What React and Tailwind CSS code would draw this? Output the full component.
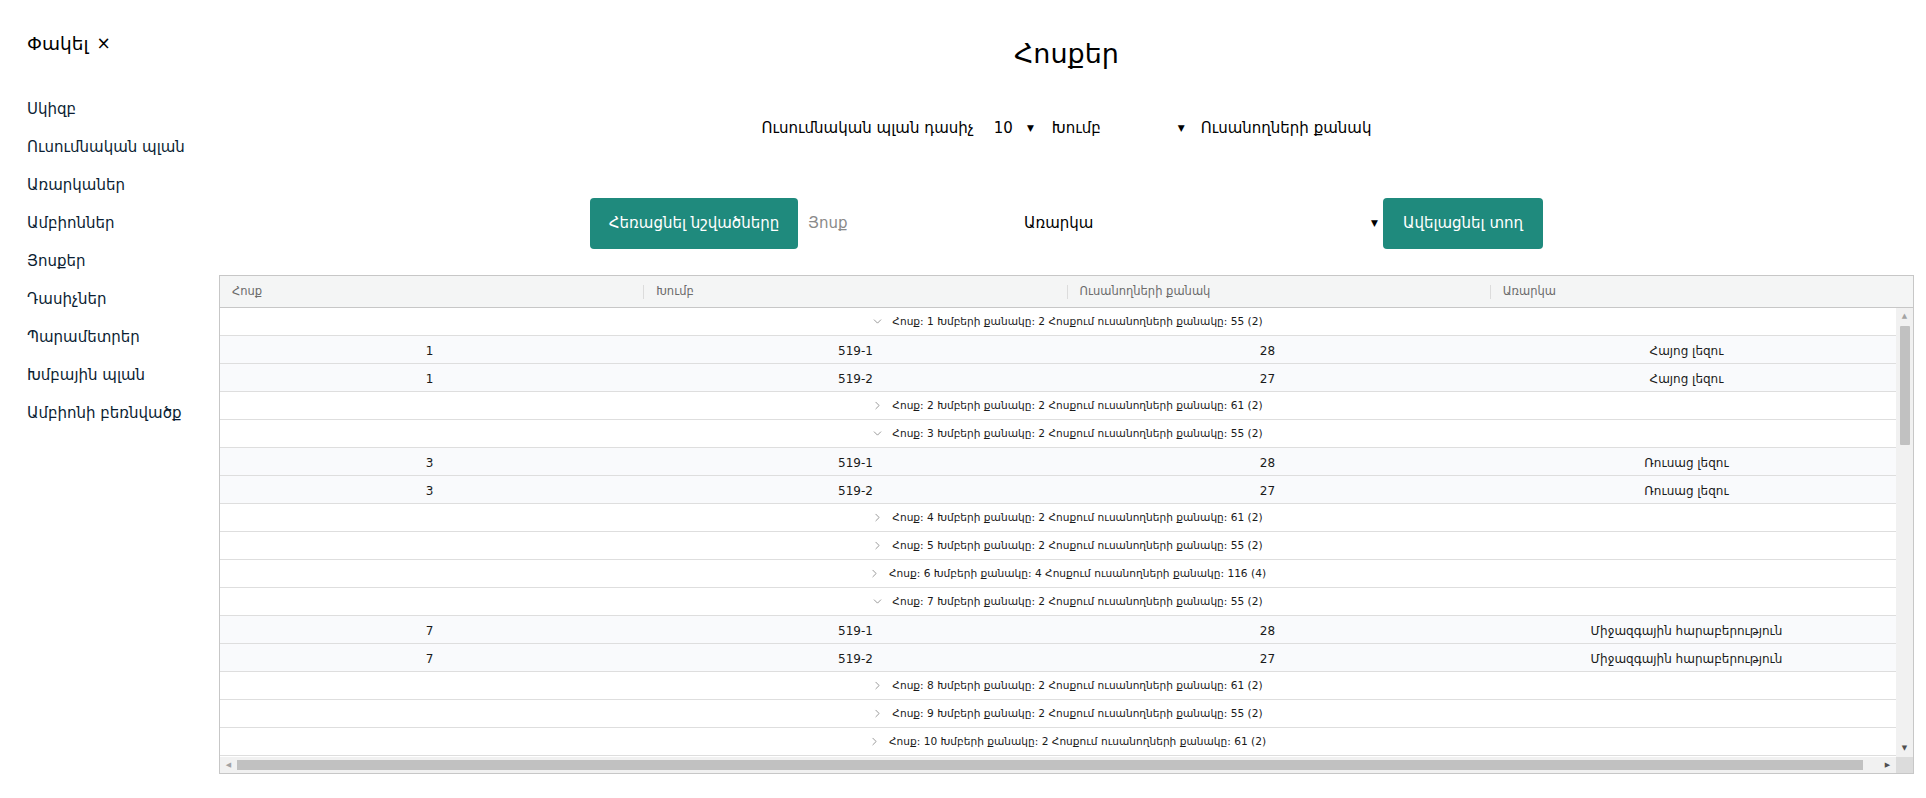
import { ChevronDown, ChevronRight } from "lucide-react";

const menu = [
  "Սկիզբ",
  "Ուսումնական պլան",
  "Առարկաներ",
  "Ամբիոններ",
  "Յոսքեր",
  "Դասիչներ",
  "Պարամետրեր",
  "Խմբային պլան",
  "Ամբիոնի բեռնվածք",
];

const rows = [
  { g: 1, n: 2, s: 55, c: 2, open: true },
  { d: ["1", "519-1", "28", "Հայոց լեզու"] },
  { d: ["1", "519-2", "27", "Հայոց լեզու"] },
  { g: 2, n: 2, s: 61, c: 2 },
  { g: 3, n: 2, s: 55, c: 2, open: true },
  { d: ["3", "519-1", "28", "Ռուսաց լեզու"] },
  { d: ["3", "519-2", "27", "Ռուսաց լեզու"] },
  { g: 4, n: 2, s: 61, c: 2 },
  { g: 5, n: 2, s: 55, c: 2 },
  { g: 6, n: 4, s: 116, c: 4 },
  { g: 7, n: 2, s: 55, c: 2, open: true },
  { d: ["7", "519-1", "28", "Միջազգային հարաբերություն"] },
  { d: ["7", "519-2", "27", "Միջազգային հարաբերություն"] },
  { g: 8, n: 2, s: 61, c: 2 },
  { g: 9, n: 2, s: 55, c: 2 },
  { g: 10, n: 2, s: 61, c: 2 },
];

const headers = ["Հոսք", "Խումբ", "Ուսանողների քանակ", "Առարկա"];

function Arrow() {
  return <span className="text-[9px] leading-none text-black">▼</span>;
}

export default function App() {
  return (
    <div className="flex h-[798px] w-[1926px] overflow-hidden bg-white font-['Segoe_UI','DejaVu_Sans',sans-serif] text-[#212529]">
      {/* sidebar */}
      <aside className="w-[207px] shrink-0 pl-[27px] pt-[30px]">
        <div className="flex h-[28px] items-center gap-2 text-[18.5px] text-black">
          Փակել <span className="text-[17px]">×</span>
        </div>
        <nav className="mt-[32px] flex flex-col">
          {menu.map((m) => (
            <a
              key={m}
              className="flex h-[38px] items-center whitespace-nowrap text-[15px] text-[#0b1e33]"
            >
              {m}
            </a>
          ))}
        </nav>
      </aside>

      {/* main */}
      <main className="flex-1 px-3 pt-[34px]">
        <h1 className="text-center text-[27px] leading-[40px] text-black">
          Հոսքեր
        </h1>

        <div className="mt-[39px] flex h-[30px] items-center justify-center text-[15px] text-black">
          <span>Ուսումնական պլան դասիչ</span>
          <div className="ml-[20px] flex w-[50px] items-center gap-[14px]">
            <span>10</span>
            <Arrow />
          </div>
          <span className="ml-[8px]">Խումբ</span>
          <div className="flex w-[88px] items-center justify-end pr-[4px]">
            <Arrow />
          </div>
          <span className="ml-[12px]">Ուսանողների քանակ</span>
        </div>

        <div className="mt-[55px] flex items-center justify-center">
          <button className="h-[51px] w-[208px] rounded-[4px] bg-[#1f8a7d] text-[15px] text-white">
            Հեռացնել նշվածները
          </button>
          <div className="flex h-[51px] w-[220px] items-center pl-[10px] text-[15px] text-[#8a8a8a]">
            Յոսք
          </div>
          <div className="flex h-[51px] w-[365px] items-center justify-between pl-[6px] pr-[5px] text-[15px] text-black">
            <span>Առարկա</span>
            <Arrow />
          </div>
          <button className="h-[51px] w-[160px] rounded-[4px] bg-[#1f8a7d] text-[15px] text-white">
            Ավելացնել տող
          </button>
        </div>

        {/* table */}
        <div className="mt-[26px] flex h-[499px] flex-col border border-[#c7c7c7]">
          <div className="grid h-[32px] shrink-0 grid-cols-4 border-b border-[#c7c7c7] bg-[#f4f5f5] text-[11.5px] text-[#6b6b6b]">
            {headers.map((h, i) => (
              <div key={h} className="flex items-center">
                {i > 0 && <div className="h-[14px] w-px bg-[#dcdcdc]" />}
                <span className="pl-[12px]">{h}</span>
              </div>
            ))}
          </div>

          <div className="flex min-h-0 flex-1">
            <div className="flex-1 overflow-hidden">
              {rows.map((r, i) =>
                r.d ? (
                  <div
                    key={i}
                    className="grid h-[28px] grid-cols-4 items-center border-b border-[#dedede] bg-[#f9fafc] pt-[2px] text-center text-[12px] text-[#1a1a1a]"
                  >
                    {r.d.map((c, j) => (
                      <div key={j} className={j === 1 ? "pl-[14px]" : ""}>
                        {c}
                      </div>
                    ))}
                  </div>
                ) : (
                  <div
                    key={i}
                    className="flex h-[28px] items-center justify-center gap-[8px] border-b border-[#dedede] bg-white pl-[18px] text-[10.6px] text-[#1a1a1a]"
                  >
                    {r.open ? (
                      <ChevronDown size={13} strokeWidth={1.3} className="text-[#707070]" />
                    ) : (
                      <ChevronRight size={13} strokeWidth={1.3} className="text-[#707070]" />
                    )}
                    <span>
                      Հոսք: {r.g} Խմբերի քանակը: {r.n} Հոսքում ուսանողների
                      քանակը: {r.s} ({r.c})
                    </span>
                  </div>
                )
              )}
            </div>

            {/* vertical scrollbar */}
            <div className="flex w-[17px] shrink-0 flex-col items-center bg-[#f1f1f1]">
              <div className="flex h-[17px] items-center text-[7px] text-[#a3a3a3]">▲</div>
              <div className="mt-[1px] h-[119px] w-[10px] rounded-[1px] bg-[#c1c1c1]" />
              <div className="flex-1" />
              <div className="flex h-[17px] items-center text-[7px] text-[#505050]">▼</div>
            </div>
          </div>

          {/* horizontal scrollbar */}
          <div className="flex h-[16px] shrink-0 items-center bg-[#f1f1f1]">
            <div className="flex w-[17px] justify-center text-[7px] text-[#a3a3a3]">◀</div>
            <div className="h-[10px] w-[1626px] bg-[#c1c1c1]" />
            <div className="flex-1" />
            <div className="flex w-[17px] justify-center text-[7px] text-[#505050]">▶</div>
            <div className="w-[17px] self-stretch bg-[#dcdcdc]" />
          </div>
        </div>
      </main>
    </div>
  );
}
